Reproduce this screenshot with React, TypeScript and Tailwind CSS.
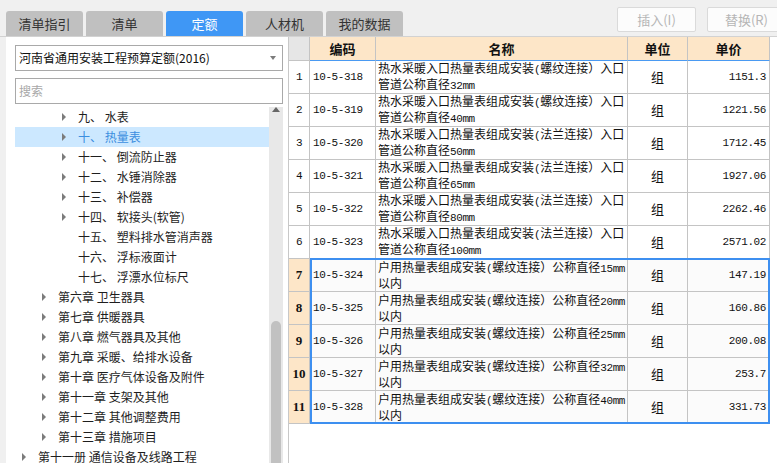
import React from 'react';

const tabs = ['清单指引', '清单', '定额', '人材机', '我的数据'];

type TreeItem = { text: string; level: number; arrow: boolean; active?: boolean };

const tree: TreeItem[] = [
  { text: '九、 水表', level: 3, arrow: true },
  { text: '十、 热量表', level: 3, arrow: true, active: true },
  { text: '十一、 倒流防止器', level: 3, arrow: true },
  { text: '十二、 水锤消除器', level: 3, arrow: true },
  { text: '十三、 补偿器', level: 3, arrow: true },
  { text: '十四、 软接头(软管)', level: 3, arrow: true },
  { text: '十五、 塑料排水管消声器', level: 3, arrow: false },
  { text: '十六、 浮标液面计', level: 3, arrow: false },
  { text: '十七、 浮漂水位标尺', level: 3, arrow: false },
  { text: '第六章 卫生器具', level: 2, arrow: true },
  { text: '第七章 供暖器具', level: 2, arrow: true },
  { text: '第八章 燃气器具及其他', level: 2, arrow: true },
  { text: '第九章 采暖、给排水设备', level: 2, arrow: true },
  { text: '第十章 医疗气体设备及附件', level: 2, arrow: true },
  { text: '第十一章 支架及其他', level: 2, arrow: true },
  { text: '第十二章 其他调整费用', level: 2, arrow: true },
  { text: '第十三章 措施项目', level: 2, arrow: true },
  { text: '第十一册 通信设备及线路工程', level: 1, arrow: true },
];

type Row = { n: number; code: string; l1: string; l2: string; price: string };

const rows: Row[] = [
  { n: 1, code: '10-5-318', l1: '热水采暖入口热量表组成安装(螺纹连接）入口', l2: '管道公称直径32mm', price: '1151.3' },
  { n: 2, code: '10-5-319', l1: '热水采暖入口热量表组成安装(螺纹连接）入口', l2: '管道公称直径40mm', price: '1221.56' },
  { n: 3, code: '10-5-320', l1: '热水采暖入口热量表组成安装(法兰连接）入口', l2: '管道公称直径50mm', price: '1712.45' },
  { n: 4, code: '10-5-321', l1: '热水采暖入口热量表组成安装(法兰连接）入口', l2: '管道公称直径65mm', price: '1927.06' },
  { n: 5, code: '10-5-322', l1: '热水采暖入口热量表组成安装(法兰连接）入口', l2: '管道公称直径80mm', price: '2262.46' },
  { n: 6, code: '10-5-323', l1: '热水采暖入口热量表组成安装(法兰连接）入口', l2: '管道公称直径100mm', price: '2571.02' },
  { n: 7, code: '10-5-324', l1: '户用热量表组成安装(螺纹连接）公称直径15mm', l2: '以内', price: '147.19' },
  { n: 8, code: '10-5-325', l1: '户用热量表组成安装(螺纹连接）公称直径20mm', l2: '以内', price: '160.86' },
  { n: 9, code: '10-5-326', l1: '户用热量表组成安装(螺纹连接）公称直径25mm', l2: '以内', price: '200.08' },
  { n: 10, code: '10-5-327', l1: '户用热量表组成安装(螺纹连接）公称直径32mm', l2: '以内', price: '253.7' },
  { n: 11, code: '10-5-328', l1: '户用热量表组成安装(螺纹连接）公称直径40mm', l2: '以内', price: '331.73' },
];

const mono = "font-['Liberation_Mono',monospace] text-[11px] tracking-[-0.4px]";

// ascii runs get a narrow mono face, like the SimSun grid text
const Mixed = ({ text }: { text: string }) => (
  <>
    {text.split(/([\x20-\x7e]+)/).map((p, i) =>
      /^[\x20-\x7e]+$/.test(p) ? <span key={i} className={mono}>{p}</span> : <span key={i}>{p}</span>
    )}
  </>
);

const Arrow = () => (
  <div className="w-0 h-0 border-y-[4px] border-y-transparent border-l-[4px] border-l-[#7c7c7c]" />
);

const App: React.FC = () => {
  return (
    <div className="w-[777px] h-[463px] overflow-hidden bg-[#f0f0f0] flex flex-col font-['Noto_Sans_CJK_SC',sans-serif] text-[#222]">
      {/* top bar */}
      <div className="h-[36px] flex items-end shrink-0 overflow-hidden">
        <div className="ml-[6px] flex gap-[3px] shrink-0">
          {tabs.map(t => (
            <div
              key={t}
              className={`w-[77px] h-[25px] rounded-t-[3px] flex items-center justify-center text-[13px] ${t === '定额' ? 'bg-[#3f97f5] text-white' : 'bg-[#c0c0c0] text-[#333]'}`}
            >
              {t}
            </div>
          ))}
        </div>
        <div className="self-start mt-[7px] ml-[214px] flex gap-[11px] shrink-0">
          <button className="w-[79px] h-[25px] bg-[#fcfcfc] border border-[#dadada] rounded-[2px] text-[13px] text-[#b6b6b6]">插入(I)</button>
          <button className="w-[79px] h-[25px] bg-[#fcfcfc] border border-[#dadada] rounded-[2px] text-[13px] text-[#b6b6b6]">替换(R)</button>
        </div>
      </div>

      <div className="flex-1 flex min-h-0 border-t border-[#d2d2d2]">
        {/* left panel */}
        <div className="ml-[6px] w-[283px] bg-white border-r border-[#c8c8c8] flex flex-col pl-[9px] pr-[5px] pt-[8px] min-h-0">
          <div className="h-[26px] border border-[#a9a9a9] flex items-center pl-[3px] pr-[6px] text-[12px] text-[#111] shrink-0">
            <span className="flex-1">河南省通用安装工程预算定额(2016)</span>
            <div className="w-0 h-0 border-x-[3.5px] border-x-transparent border-t-[4px] border-t-[#7c7c7c]" />
          </div>
          <div className="mt-[7px] h-[26px] border border-[#a9a9a9] flex items-center pl-[3px] text-[12px] text-[#a8a8a8] shrink-0">
            搜索
          </div>
          <div className="mt-[3px] flex-1 flex min-h-0 overflow-hidden">
            <div className="flex-1 flex flex-col">
              {tree.map(item => (
                <div
                  key={item.text}
                  className={`h-[20px] shrink-0 flex items-center text-[12px] whitespace-nowrap ${item.active ? 'bg-[#cce8ff] text-[#3b8ee0]' : 'text-[#1e1e1e]'} ${item.level === 3 ? 'pl-[47px]' : item.level === 2 ? 'pl-[27px]' : 'pl-[7px]'}`}
                >
                  <div className="w-[16px] flex items-center">{item.arrow && <Arrow />}</div>
                  <span>{item.text}</span>
                </div>
              ))}
            </div>
            <div className="w-[14px] bg-[#e8e8e8] flex flex-col items-center">
              <div className="h-[14px] flex items-center justify-center">
                <div className="w-0 h-0 border-x-[4px] border-x-transparent border-b-[5px] border-b-[#666]" />
              </div>
              <div className="mt-[209px] w-[10px] h-[200px] bg-[#c1c1c1] rounded-t-[5px] shrink-0" />
            </div>
          </div>
        </div>

        {/* right panel */}
        <div className="flex-1 bg-white min-w-0">
          <div className="relative w-[481px] text-[#111]">
            <div className="flex h-[24px] text-[13px] font-bold">
              <div className="w-[21px] bg-[#e6e6e6] border-r border-b border-[#c4c4c4]" />
              <div className="w-[66px] bg-[#fde6c8] border-r border-r-[#c4c4c4] border-b border-b-[#4a9af2] flex items-center justify-center">编码</div>
              <div className="w-[252px] bg-[#fde6c8] border-r border-r-[#c4c4c4] border-b border-b-[#4a9af2] flex items-center justify-center">名称</div>
              <div className="w-[60px] bg-[#fde6c8] border-r border-r-[#c4c4c4] border-b border-b-[#4a9af2] flex items-center justify-center">单位</div>
              <div className="w-[82px] bg-[#fde6c8] border-r border-r-[#c4c4c4] border-b border-b-[#4a9af2] flex items-center justify-center">单价</div>
            </div>
            {rows.map(r => {
              const sel = r.n >= 7;
              return (
                <div key={r.n} className={`flex h-[33px] text-[12px] ${sel ? 'bg-[#fbfbfb]' : 'bg-white'}`}>
                  <div className={`w-[21px] border-r border-b border-[#c4c4c4] flex items-center justify-center ${sel ? "bg-[#fde6c8] font-bold font-['Liberation_Serif',serif] text-[13px]" : mono}`}>
                    {r.n}
                  </div>
                  <div className={`w-[66px] border-r border-b border-[#c4c4c4] flex items-center pl-[3px] ${mono}`}>{r.code}</div>
                  <div className="w-[252px] border-r border-b border-[#c4c4c4] flex flex-col justify-center pl-[2px] leading-[14px] whitespace-nowrap">
                    <div><Mixed text={r.l1} /></div>
                    <div><Mixed text={r.l2} /></div>
                  </div>
                  <div className="w-[60px] border-r border-b border-[#c4c4c4] flex items-center justify-center text-[13px]">组</div>
                  <div className={`w-[82px] border-r border-b border-[#c4c4c4] flex items-center justify-end pr-[3px] ${mono}`}>{r.price}</div>
                </div>
              );
            })}
            {/* selection frame over rows 7-11 */}
            <div className="absolute left-[21px] top-[221px] w-[460px] h-[166px] border-2 border-[#3d8ff0] pointer-events-none" />
          </div>
        </div>
      </div>
    </div>
  );
};

export default App;
